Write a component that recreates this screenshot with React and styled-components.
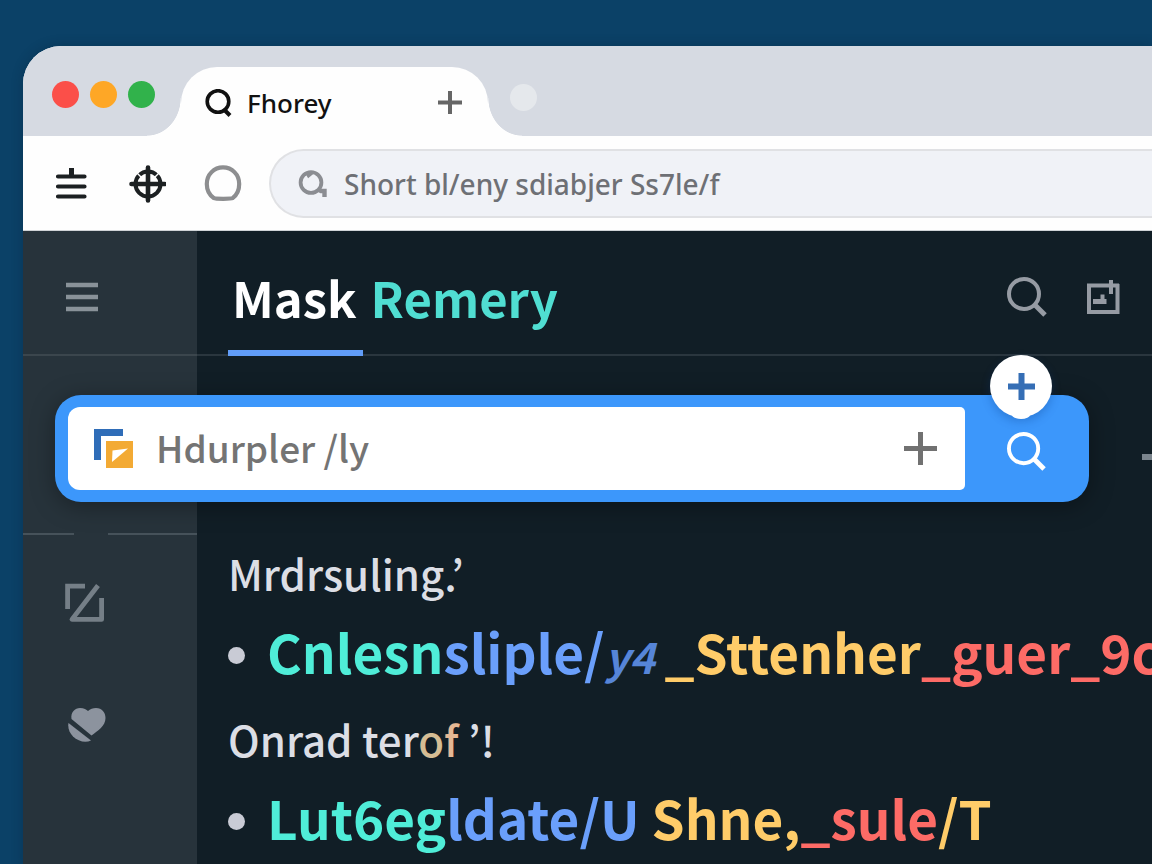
import React from "react";
import styled, { createGlobalStyle } from "styled-components";

const GlobalStyle = createGlobalStyle`
  * {
    box-sizing: border-box;
  }

  body {
    margin: 0;
    background-color: #0b4167;
    font-family: "Noto Sans CJK KR", "Noto Sans", sans-serif;
    overflow: hidden;
  }

  button {
    border: 0;
    padding: 0;
    background: none;
    font: inherit;
    color: inherit;
    cursor: pointer;
  }

  svg {
    display: block;
  }
`;

const Desktop = styled.div`
  height: 100vh;
  padding: 46px 0 0 23px;
  overflow: hidden;
`;

const BrowserWindow = styled.div`
  min-height: 100%;
  display: flex;
  flex-direction: column;
  border-top-left-radius: 38px;
  background-color: #fefefe;
  box-shadow: 0 0 12px rgba(4, 30, 50, 0.3);
  overflow: hidden;
`;

const TabStrip = styled.div`
  display: flex;
  align-items: flex-start;
  height: 90px;
  padding-left: 29px;
  background-color: #d6dae2;
`;

const WindowControls = styled.div`
  display: flex;
  gap: 11px;
  margin: 35px 26px 0 0;
`;

const ControlDot = styled.button`
  width: 27px;
  height: 27px;
  border-radius: 50%;
  background-color: ${(props) => props.$color};
`;

const BrowserTab = styled.div`
  position: relative;
  display: flex;
  align-items: center;
  width: 307px;
  height: 69px;
  margin-top: 21px;
  padding: 2px 26px 0 24px;
  border-radius: 36px 36px 0 0;
  background-color: #fefefe;
  color: #111;

  &::before,
  &::after {
    content: "";
    position: absolute;
    bottom: 0;
    width: 34px;
    height: 38px;
  }

  &::before {
    right: 100%;
    background: radial-gradient(
      ellipse 100% 100% at 0 0,
      transparent 98%,
      #fefefe 100%
    );
  }

  &::after {
    left: 100%;
    background: radial-gradient(
      ellipse 100% 100% at 100% 0,
      transparent 98%,
      #fefefe 100%
    );
  }
`;

const TabTitle = styled.span`
  flex: 1;
  margin-left: 14px;
  font-family: "Noto Sans", sans-serif;
  font-size: 26px;
  font-weight: 500;
  line-height: 36px;
`;

const NewTab = styled(ControlDot)`
  margin: 38px 0 0 22px;
`;

const Toolbar = styled.div`
  display: flex;
  align-items: center;
  padding: 13px 0 12px 29px;
  border-bottom: 1px solid #cfd3d6;
`;

const ToolbarActions = styled.div`
  display: flex;
  gap: 38px;
  margin-right: 27px;
`;

const AddressBar = styled.label`
  flex: 1;
  display: flex;
  align-items: center;
  gap: 16px;
  height: 69px;
  padding-left: 27px;
  border: 2px solid #e0e1e4;
  border-right: 0;
  border-radius: 35px 0 0 35px;
  background-color: #f0f2f7;
`;

const AddressInput = styled.input`
  flex: 1;
  min-width: 0;
  border: 0;
  padding: 0;
  outline: 0;
  background: none;
  color: #6e7075;
  font-family: "Noto Sans", sans-serif;
  font-size: 28px;
  font-weight: 500;
`;

const Page = styled.div`
  flex: 1;
  display: grid;
  grid-template-columns: 174px 1fr;
  grid-template-rows: 125px auto 1fr;
  background-color: #111e26;
`;

const SidebarFill = styled.div`
  grid-column: 1;
  grid-row: 1 / -1;
  background-color: #27333b;
`;

const SidebarTop = styled.div`
  grid-column: 1;
  grid-row: 1;
  display: flex;
  align-items: center;
  padding: 8px 0 0 42px;
  color: #899299;
  border-bottom: 2px solid #3b464d;
`;

const Header = styled.header`
  grid-column: 2;
  grid-row: 1;
  display: flex;
  align-items: stretch;
  justify-content: space-between;
  padding: 0 32px 0 31px;
  border-bottom: 2px solid #2a363e;
`;

const Nav = styled.nav`
  display: flex;
  gap: 4px;
`;

const NavLink = styled.a`
  position: relative;
  padding: 0 6px 0 4px;
  color: ${(props) => props.$color};
  font-size: 49px;
  font-weight: 700;
  line-height: 131px;
  text-decoration: none;

  &::after {
    content: "";
    display: ${(props) => (props.$active ? "block" : "none")};
    position: absolute;
    left: 0;
    right: 0;
    bottom: -2px;
    height: 6px;
    background-color: #619df8;
  }
`;

const HeaderActions = styled.div`
  display: flex;
  align-items: center;
  gap: 40px;
  padding-top: 8px;
  color: #969ba3;
`;

const SearchRow = styled.div`
  grid-column: 1 / -1;
  grid-row: 2;
  display: flex;
  align-items: center;
  gap: 53px;
  padding: 39px 0 31px 32px;
`;

const SearchForm = styled.form`
  flex: 1;
  display: flex;
  align-items: stretch;
  height: 107px;
  border-radius: 26px;
  background-color: #3c97fb;
  box-shadow: 0 4px 24px rgba(0, 0, 0, 0.35);
`;

const SearchField = styled.label`
  flex: 1;
  display: flex;
  align-items: center;
  gap: 23px;
  margin: 12px 0 12px 13px;
  padding: 0 28px 0 26px;
  border-radius: 12px 5px 5px 12px;
  background-color: #fff;
  color: #717171;
`;

const SearchInput = styled.input`
  flex: 1;
  min-width: 0;
  border: 0;
  padding: 0 0 4px;
  outline: 0;
  background: none;
  color: #747474;
  font-family: inherit;
  font-size: 37px;
  font-weight: 500;
`;

const SearchSide = styled.div`
  position: relative;
  display: flex;
  width: 124px;
  color: #fff;
`;

const SubmitButton = styled.button`
  flex: 1;
  display: flex;
  align-items: center;
  padding: 6px 0 0 42px;
`;

const AddBadge = styled.button`
  position: absolute;
  top: -40px;
  left: 25px;
  width: 62px;
  height: 62px;
  display: flex;
  align-items: center;
  justify-content: center;
  border-radius: 50%;
  background-color: #fff;
  color: #356eb5;
  box-shadow: 0 4px 10px rgba(10, 60, 140, 0.3);

  &::after {
    content: "";
    position: absolute;
    bottom: -2px;
    left: 22px;
    width: 18px;
    height: 8px;
    border-radius: 50%;
    background-color: #fff;
  }
`;

const EdgeDash = styled.div`
  width: 10px;
  height: 6px;
  margin-top: 16px;
  background-color: #7b858d;
`;

const SidebarList = styled.nav`
  grid-column: 1;
  grid-row: 3;
  display: flex;
  flex-direction: column;
  align-items: flex-start;
  gap: 84px;
  color: #757f87;
`;

const SidebarDivider = styled.div`
  align-self: stretch;
  display: grid;
  grid-template-columns: 51px 1fr;
  gap: 34px;
  height: 2px;
  margin-bottom: -36px;

  &::before,
  &::after {
    content: "";
    background-color: #46525a;
  }
`;

const SidebarButton = styled.button`
  margin-left: 42px;
`;

const Content = styled.main`
  grid-column: 2;
  grid-row: 3;
  padding: 2px 0 0 31px;
  overflow: hidden;
`;

const Paragraph = styled.p`
  margin: 0;
  color: #dcdee5;
  font-size: 42px;
  font-weight: 500;
  line-height: 76px;
`;

const BulletList = styled.ul`
  margin: 0 0 10px;
  padding: 0;
  list-style: none;
`;

const BulletItem = styled.li`
  display: flex;
  align-items: center;
  gap: 22px;
  font-size: 53px;
  font-weight: 700;
  line-height: 80px;
  white-space: pre;

  &::before {
    content: "";
    flex: none;
    width: 17px;
    height: 17px;
    margin-top: 8px;
    border-radius: 50%;
    background-color: #c9cbd5;
  }
`;

const Token = styled.span`
  color: ${(props) => props.$color};
`;

const SlantToken = styled(Token)`
  font-size: 43px;
  font-style: italic;
  line-height: 1;
`;

const teal = "#4fedd8";
const blue = "#6a9ffb";
const yellow = "#ffcc69";
const red = "#fd6b66";

function PlusIcon({ size, stroke }) {
  return (
    <svg
      width={size}
      height={size}
      viewBox={`0 0 ${size} ${size}`}
      stroke="currentColor"
      strokeWidth={stroke}
      aria-hidden="true"
    >
      <path d={`M${size / 2} 0V${size}M0 ${size / 2}H${size}`} />
    </svg>
  );
}

function SearchIcon({ size, stroke }) {
  return (
    <svg
      width={size}
      height={size}
      viewBox="0 0 40 40"
      fill="none"
      stroke="currentColor"
      strokeWidth={stroke}
      aria-hidden="true"
    >
      <circle cx="17" cy="17" r="15" />
      <path d="M27 27L38 38" strokeWidth={stroke + 1} />
    </svg>
  );
}

function TabSearchIcon() {
  return (
    <svg width="28" height="28" viewBox="0 0 28 28" fill="none" aria-hidden="true">
      <circle cx="13" cy="12.5" r="10.8" stroke="#111" strokeWidth="3.6" />
      <path d="M18.5 20L25 26.5" stroke="#111" strokeWidth="4" />
    </svg>
  );
}

function MenuPinIcon() {
  return (
    <svg width="38" height="38" viewBox="0 0 38 38" aria-hidden="true">
      <g stroke="#1c2022" strokeWidth="4.2" strokeLinecap="round">
        <path d="M6 11.5H32.5M6 21.5H32.5M6 31.5H32.5" />
        <path d="M19.5 3V11" strokeWidth="5" strokeLinecap="butt" />
      </g>
    </svg>
  );
}

function TargetIcon() {
  return (
    <svg width="38" height="38" viewBox="0 0 38 38" fill="none" aria-hidden="true">
      <circle cx="20" cy="19" r="12.5" stroke="#1c2022" strokeWidth="4" />
      <path
        d="M20 2.5V35.5M3.5 19H36.5"
        stroke="#1c2022"
        strokeWidth="4.6"
        strokeLinecap="round"
      />
      <path d="M9 8l4 4M31 8l-4 4" stroke="#fefefe" strokeWidth="1.4" />
    </svg>
  );
}

function RoundIcon() {
  return (
    <svg width="38" height="38" viewBox="0 0 38 38" fill="none" aria-hidden="true">
      <path
        d="M10 33.2C5.2 30 2.8 25 2.8 19C2.8 9.5 10 2.4 19 2.4S35.2 9.5 35.2 19C35.2 25 32.8 30 28.6 33.2C27 34 11.5 34 10 33.2Z"
        stroke="#8d8e90"
        strokeWidth="4.2"
      />
    </svg>
  );
}

function AddressIcon() {
  return (
    <svg width="30" height="30" viewBox="0 0 30 30" fill="none" stroke="#8b8d92" aria-hidden="true">
      <circle cx="13" cy="13.5" r="10.4" strokeWidth="3.8" />
      <path d="M9 4.5L10.5 7L14 4" strokeWidth="3" />
      <path d="M20 20.5L23 22H26.5V28" strokeWidth="4.4" />
    </svg>
  );
}

function MenuIcon() {
  return (
    <svg width="33" height="30" viewBox="0 0 33 30" stroke="currentColor" strokeWidth="4.6" aria-hidden="true">
      <path d="M1 3H33M1 15H33M1 27H33" />
    </svg>
  );
}

function FrameIcon() {
  return (
    <svg width="33" height="36" viewBox="0 0 33 36" fill="none" stroke="currentColor" strokeWidth="4" aria-hidden="true">
      <path d="M20 6.5H2V33H30.5V5" />
      <path d="M24 1V15M20 6.5H32" />
      <path d="M6 22.5H19.5" strokeWidth="5" />
      <path d="M15.5 15.5V21" />
    </svg>
  );
}

function BrandIcon() {
  return (
    <svg width="39" height="39" viewBox="0 0 39 39" aria-hidden="true">
      <path d="M0 0H29V7H7V31H0Z" fill="#2f6db8" />
      <rect x="12" y="12" width="27" height="27" fill="#f3aa34" />
      <path d="M18.5 21.5L34 19.5L18 33Z" fill="#fff" />
    </svg>
  );
}

function EditIcon() {
  return (
    <svg width="40" height="40" viewBox="0 0 40 40" fill="none" stroke="currentColor" strokeWidth="4.8" aria-hidden="true">
      <path d="M2.6 26V3.2H20" />
      <path d="M33 2.5L7 36.4H36.6V15" strokeLinejoin="round" />
    </svg>
  );
}

function HeartIcon() {
  return (
    <svg width="42" height="36" viewBox="0 0 42 36" fill="#8c939e" aria-hidden="true">
      <path d="M6.5 12C5.5 5 10 1 15 1C19 1 21.5 2.5 23 4C25 2 28 1 31 1C37 1 40.5 5.5 40.5 11C40.5 19 33 23.5 26.5 28.5Z" />
      <path d="M3.5 16L26 33.5C20 36.5 13 34 8 29.5C4.5 26 2.5 21 3.5 16Z" />
    </svg>
  );
}

function App() {
  return (
    <>
      <GlobalStyle />
      <Desktop>
        <BrowserWindow>
          <TabStrip>
            <WindowControls>
              <ControlDot $color="#fb4f49" aria-label="Close window" />
              <ControlDot $color="#fea726" aria-label="Minimize window" />
              <ControlDot $color="#31b24b" aria-label="Maximize window" />
            </WindowControls>
            <BrowserTab>
              <TabSearchIcon />
              <TabTitle>Fhorey</TabTitle>
              <button aria-label="Add">
                <svg width="24" height="24" viewBox="0 0 24 24" aria-hidden="true">
                  <path d="M12 0V23M0 11.5H24" stroke="#666" strokeWidth="4" />
                </svg>
              </button>
            </BrowserTab>
            <NewTab $color="#e5e8ec" aria-label="New tab" />
          </TabStrip>

          <Toolbar>
            <ToolbarActions>
              <button aria-label="Menu">
                <MenuPinIcon />
              </button>
              <button aria-label="Target">
                <TargetIcon />
              </button>
              <button aria-label="Reload">
                <RoundIcon />
              </button>
            </ToolbarActions>
            <AddressBar>
              <AddressIcon />
              <AddressInput
                aria-label="Address"
                defaultValue="Short bl/eny sdiabjer Ss7le/f"
              />
            </AddressBar>
          </Toolbar>

          <Page>
            <SidebarFill />
            <SidebarTop>
              <button aria-label="Toggle sidebar">
                <MenuIcon />
              </button>
            </SidebarTop>
            <Header>
              <Nav>
                <NavLink href="#mask" $color="#fff" $active>
                  Mask
                </NavLink>
                <NavLink href="#remery" $color="#50ded2">
                  Remery
                </NavLink>
              </Nav>
              <HeaderActions>
                <button aria-label="Search">
                  <SearchIcon size={40} stroke={4} />
                </button>
                <button aria-label="Frame">
                  <FrameIcon />
                </button>
              </HeaderActions>
            </Header>

            <SearchRow>
              <SearchForm onSubmit={(e) => e.preventDefault()}>
                <SearchField>
                  <BrandIcon />
                  <SearchInput aria-label="Query" defaultValue="Hdurpler /ly" />
                  <PlusIcon size={33} stroke={5} />
                </SearchField>
                <SearchSide>
                  <SubmitButton type="submit" aria-label="Submit search">
                    <SearchIcon size={39} stroke={4} />
                  </SubmitButton>
                  <AddBadge type="button" aria-label="Add filter">
                    <PlusIcon size={27} stroke={6} />
                  </AddBadge>
                </SearchSide>
              </SearchForm>
              <EdgeDash />
            </SearchRow>

            <SidebarList>
              <SidebarDivider />
              <SidebarButton aria-label="Edit">
                <EditIcon />
              </SidebarButton>
              <SidebarButton aria-label="Favourites">
                <HeartIcon />
              </SidebarButton>
            </SidebarList>

            <Content>
              <Paragraph>Mrdrsuling.’</Paragraph>
              <BulletList>
                <BulletItem>
                  <span>
                    <Token $color={teal}>Cnlesn</Token>
                    <Token $color={blue}>sliple/</Token>
                    <SlantToken $color="#5685d8">y4 </SlantToken>
                    <Token $color={yellow}>_Sttenher</Token>
                    <Token $color={red}>_guer_9c</Token>
                  </span>
                </BulletItem>
              </BulletList>
              <Paragraph>
                Onrad ter<Token $color="#d5bd94">o</Token>
                <Token $color="#e5b894">f</Token> ’!
              </Paragraph>
              <BulletList>
                <BulletItem>
                  <span>
                    <Token $color={teal}>Lut6eg</Token>
                    <Token $color={blue}>ldate/U </Token>
                    <Token $color={yellow}>Shne,</Token>
                    <Token $color={red}>_sule</Token>
                    <Token $color={yellow}>/T</Token>
                  </span>
                </BulletItem>
              </BulletList>
            </Content>
          </Page>
        </BrowserWindow>
      </Desktop>
    </>
  );
}

export default App;
